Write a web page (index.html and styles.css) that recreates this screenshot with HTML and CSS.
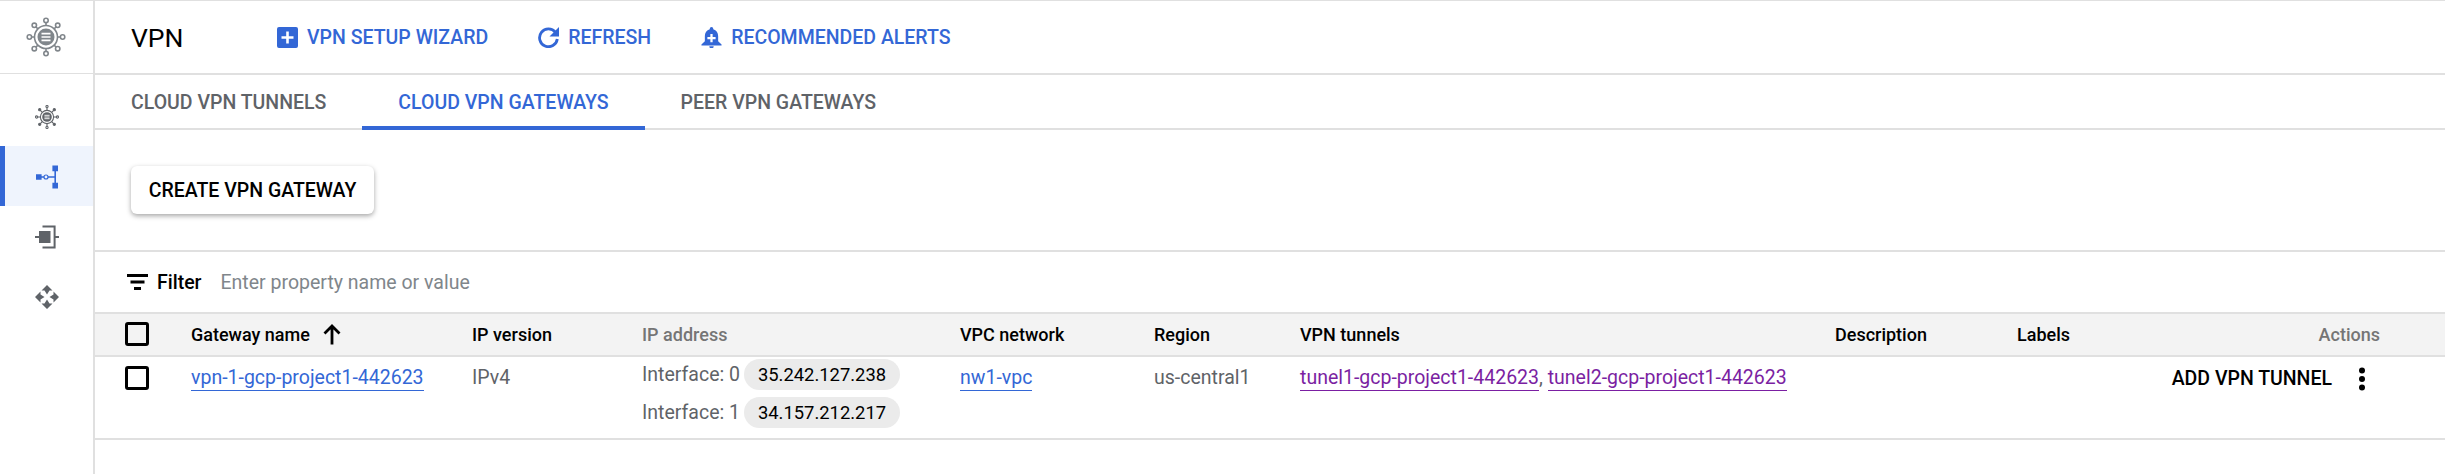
FILE: index.html
```html
<!DOCTYPE html>
<html lang="en">
<head>
<meta charset="utf-8">
<title>VPN</title>
<link rel="stylesheet" href="styles.css">
</head>
<body>
<div class="app">
  <aside class="sidebar">
    <div class="side-head">
      <svg class="logo" viewBox="0 0 40 40" fill="none" stroke="#80868b" stroke-width="1.6">
        <circle cx="20" cy="20" r="11.5"/>
        <circle cx="20" cy="20" r="8.5" fill="#80868b" stroke="none"/>
        <path d="M15.5 16.6h9M15.5 20h9M15.5 23.4h9" stroke="#fff" stroke-width="1.7"/>
        <path d="M20 8.500V5M20 31.500V35M8.500 20H5M31.500 20H35M11.900 11.900 9.500 9.500M28.100 11.900 30.500 9.500M11.900 28.100 9.500 30.500M28.100 28.100 30.500 30.500"/>
        <circle cx="20" cy="3.400" r="2.200" fill="#fff"/><circle cx="20" cy="36.600" r="2.200" fill="#fff"/>
        <circle cx="3.400" cy="20" r="2.200" fill="#fff"/><circle cx="36.600" cy="20" r="2.200" fill="#fff"/>
        <circle cx="8.300" cy="8.300" r="2.200" fill="#fff"/><circle cx="31.700" cy="8.300" r="2.200" fill="#fff"/>
        <circle cx="8.300" cy="31.700" r="2.200" fill="#fff"/><circle cx="31.700" cy="31.700" r="2.200" fill="#fff"/>
      </svg>
    </div>
    <nav class="side-nav">
      <div class="nav-item">
        <svg class="nav-icon" viewBox="0 0 24 24" fill="none" stroke="#5f6368" stroke-width="1.1">
          <circle cx="12" cy="12" r="6.600"/>
          <circle cx="12" cy="12" r="4.800" fill="#5f6368" stroke="none"/>
          <path d="M9.400 10.300h5.200M9.400 12h5.200M9.400 13.700h5.200" stroke="#fff" stroke-width=".9"/>
          <path d="M12 5.400V2.500M12 18.600v2.900M5.400 12H2.500M18.600 12h2.900M7.300 7.300 5.300 5.300M16.700 7.300l2-2M7.300 16.700l-2 2M16.700 16.700l2 2"/>
          <circle cx="12" cy="1.600" r="1.100" fill="#fff"/><circle cx="12" cy="22.400" r="1.100" fill="#fff"/>
          <circle cx="1.600" cy="12" r="1.100" fill="#fff"/><circle cx="22.400" cy="12" r="1.100" fill="#fff"/>
          <circle cx="4.700" cy="4.700" r="1.100" fill="#5f6368"/><circle cx="19.300" cy="4.700" r="1.100" fill="#5f6368"/>
          <circle cx="4.700" cy="19.300" r="1.100" fill="#5f6368"/><circle cx="19.300" cy="19.300" r="1.100" fill="#5f6368"/>
        </svg>
      </div>
      <div class="nav-item active">
        <svg class="nav-icon" viewBox="0 0 24 24" fill="#3367d6">
          <path d="M1 9.200h5.600v5.600H1zM17.400 .6H23v5.600h-5.600zM17.400 17.800H23v5.600h-5.600z"/>
          <path d="M6 11.200h3v1.600H6zM13 11.200h6.400v1.600H13zM19.400 5H21v14h-1.600z"/>
          <circle cx="11" cy="12" r="2" fill="none" stroke="#3367d6" stroke-width="1.200"/>
        </svg>
      </div>
      <div class="nav-item">
        <svg class="nav-icon" viewBox="0 0 24 24" fill="#5f6368">
          <path d="M4 6h11.500v12H4zM0 11h4v2H0zM20 11h4v2h-4zM7.500 .6H20.600v22.800H7.500v-2h11.100V2.600H7.500z"/>
        </svg>
      </div>
      <div class="nav-item">
        <svg class="nav-icon" viewBox="0 0 24 24" fill="#5f6368">
          <path d="M12 0l5.500 5.500h-3L12 9.500 9.500 5.500h-3zM12 24l5.500-5.500h-3L12 14.500 9.500 18.500h-3zM0 12l5.500-5.500v3L9.500 12l-4 2.500v3zM24 12l-5.500-5.500v3L14.500 12l4 2.500v3z"/>
        </svg>
      </div>
    </nav>
  </aside>
  <main class="main">
    <header class="page-head">
      <h1 class="title">VPN</h1>
      <a class="head-action">
        <svg class="head-icon" viewBox="0 0 21 21"><path fill="#3367d6" d="M2 0h17a2 2 0 0 1 2 2v17a2 2 0 0 1-2 2H2a2 2 0 0 1-2-2V2a2 2 0 0 1 2-2zm7.200 4.500v4.700H4.500v2.600h4.700v4.700h2.600v-4.700h4.700V9.200h-4.700V4.500z"/></svg>
        VPN SETUP WIZARD
      </a>
      <a class="head-action">
        <svg class="head-icon" viewBox="0 0 21 21"><path fill="none" stroke="#3367d6" stroke-width="2.800" d="M17.500 5.300A8.900 8.900 0 1 0 19.300 12"/><path fill="#3367d6" d="M21 0v9.500h-9.500z"/></svg>
        REFRESH
      </a>
      <a class="head-action">
        <svg class="head-icon" viewBox="0 0 24 24"><path fill="#3367d6" fill-rule="evenodd" d="M12 0a2 2 0 0 1 2 2v.6c3.600.9 5.600 4 5.600 7.800v5.800L23.500 20v1.200H.5V20l3.900-3.800v-5.800c0-3.800 2-6.900 5.600-7.800V2a2 2 0 0 1 2-2zm-1.300 8v3.500H7.300v2.400h3.400v3.400h2.600v-3.400h3.400v-2.400h-3.400V8zM9.500 22h5a2.500 2.500 0 0 1-5 0z"/></svg>
        RECOMMENDED ALERTS
      </a>
    </header>
    <div class="tabs">
      <div class="tab">CLOUD VPN TUNNELS</div>
      <div class="tab current">CLOUD VPN GATEWAYS</div>
      <div class="tab">PEER VPN GATEWAYS</div>
    </div>
    <section class="create-bar">
      <button class="raised">CREATE VPN GATEWAY</button>
    </section>
    <div class="filter-bar">
      <svg class="filter-icon" viewBox="0 0 21 16"><path d="M0 0h21v3H0zM3.500 6.500h14v3h-14zM7 13h7v3H7z"/></svg>
      <span class="filter-label">Filter</span>
      <span class="filter-hint">Enter property name or value</span>
    </div>
    <div class="grid-row table-head">
      <span class="box"></span>
      <span class="sort">Gateway name
        <svg class="arrow" viewBox="0 0 18 20"><path d="M9 20V2M1.500 9 9 1.500 16.500 9" fill="none" stroke="#000" stroke-width="2.800"/></svg>
      </span>
      <span>IP version</span>
      <span class="dim">IP address</span>
      <span>VPC network</span>
      <span>Region</span>
      <span>VPN tunnels</span>
      <span>Description</span>
      <span>Labels</span>
      <span class="dim actions-head">Actions</span>
    </div>
    <div class="grid-row table-row">
      <span class="box"></span>
      <span class="cell"><a class="link">vpn-1-gcp-project1-442623</a></span>
      <span class="cell">IPv4</span>
      <span class="ifaces">
        <span class="iface">Interface: 0 <b class="chip">35.242.127.238</b></span>
        <span class="iface">Interface: 1 <b class="chip">34.157.212.217</b></span>
      </span>
      <span class="cell"><a class="link">nw1-vpc</a></span>
      <span class="cell">us-central1</span>
      <span class="cell tunnels"><a class="link visited">tunel1-gcp-project1-442623</a>, <a class="link visited">tunel2-gcp-project1-442623</a></span>
      <span></span>
      <span></span>
      <span class="row-actions">
        <span class="add">ADD VPN TUNNEL</span>
        <svg class="dots" viewBox="0 0 8 24"><circle cx="4" cy="3.500" r="3"/><circle cx="4" cy="12" r="3"/><circle cx="4" cy="20.500" r="3"/></svg>
      </span>
    </div>
  </main>
</div>
</body>
</html>
```
FILE: styles.css
```css
* { box-sizing: border-box; }
html, body { margin: 0; padding: 0; height: 100%; background: #fff; overflow: hidden; }
body { font-family: Roboto, "Liberation Sans", sans-serif; font-size: 19.5px; color: #5f6368; }
.app { display: flex; height: 474px; border-top: 1px solid #e0e0e0; }
.sidebar { width: 95px; flex: none; border-right: 2px solid #e0e0e0; }
.side-head { height: 73px; border-bottom: 1px solid #e0e0e0; display: flex; align-items: center; justify-content: center; }
.logo { width: 40px; height: 40px; margin-right: 1px; }
.side-nav { padding-top: 12px; }
.nav-item { height: 60px; display: flex; align-items: center; justify-content: center; border-left: 5px solid transparent; }
.nav-item.active { background: #eff4fd; border-left-color: #3367d6; }
.nav-icon { width: 24px; height: 24px; margin: 2px 0 0 -5px; }
.main { flex: 1; min-width: 0; }
.page-head { height: 74px; border-bottom: 2px solid #e0e0e0; display: flex; align-items: center; padding-left: 36px; }
.title { margin: 0; width: 146px; font-size: 26.5px; font-weight: 400; color: #000; }
.head-action { display: flex; align-items: center; gap: 9px; color: #3367d6; font-weight: 500; margin-right: 50px; }
.head-icon { width: 21px; height: 21px; }
.tabs { height: 55px; display: flex; border-bottom: 2px solid #e0e0e0; }
.tab { padding: 0 36px; line-height: 56px; font-weight: 500; color: #5f6368; height: 55px; }
.tab.current { color: #3367d6; border-bottom: 4px solid #3367d6; }
.create-bar { height: 122px; border-bottom: 2px solid #e0e0e0; padding: 36px 0 0 36px; }
.raised { width: 243px; height: 48px; border: 0; border-radius: 6px; background: #fff; color: #000; font: 500 19.5px Roboto, sans-serif; box-shadow: 0 2px 5px rgba(0,0,0,.35); }
.filter-bar { height: 60px; display: flex; align-items: center; padding-left: 32px; }
.filter-icon { width: 21px; height: 16px; margin-right: 9px; }
.filter-label { color: #000; font-weight: 500; margin-right: 19px; }
.filter-hint { color: #80868b; }
.grid-row { display: grid; grid-template-columns: 66px 281px 170px 318px 194px 146px 535px 182px 100px 263px; padding-left: 30px; }
.table-head { height: 45px; padding-bottom: 1px; background: #f3f3f3; border-top: 2px solid #e0e0e0; border-bottom: 2px solid #e0e0e0; align-items: center; color: #000; font-size: 18px; font-weight: 500; }
.table-row { height: 83px; border-bottom: 2px solid #e0e0e0; color: #5f6368; }
.box { width: 24px; height: 24px; border: 3px solid #000; border-radius: 3px; display: block; }
.table-row .box { margin-top: 9px; }
.sort { display: flex; align-items: center; gap: 13px; }
.arrow { width: 18px; height: 21px; margin-top: 1px; }
.dim { color: #757575; }
.actions-head { text-align: right; }
.cell { padding-top: 9px; line-height: 24px; }
.link { color: #3367d6; border-bottom: 1px solid #3367d6; padding-bottom: 1px; }
.link.visited { color: #7b1fa2; border-bottom-color: #7b1fa2; }
.ifaces { display: flex; flex-direction: column; padding-top: 2px; gap: 7px; }
.iface { display: flex; align-items: center; justify-content: space-between; width: 258px; height: 31px; }
.chip { display: inline-block; height: 31px; line-height: 32px; width: 156px; text-align: center; border-radius: 16px; background: #ebebeb; color: #000; font-size: 18.4px; font-weight: 400; }
.row-actions { display: flex; align-items: flex-start; justify-content: flex-end; padding: 10px 14px 0 0; }
.add { color: #000; font-weight: 500; line-height: 24px; }
.dots { width: 8px; height: 24px; margin-left: 26px; }
```
